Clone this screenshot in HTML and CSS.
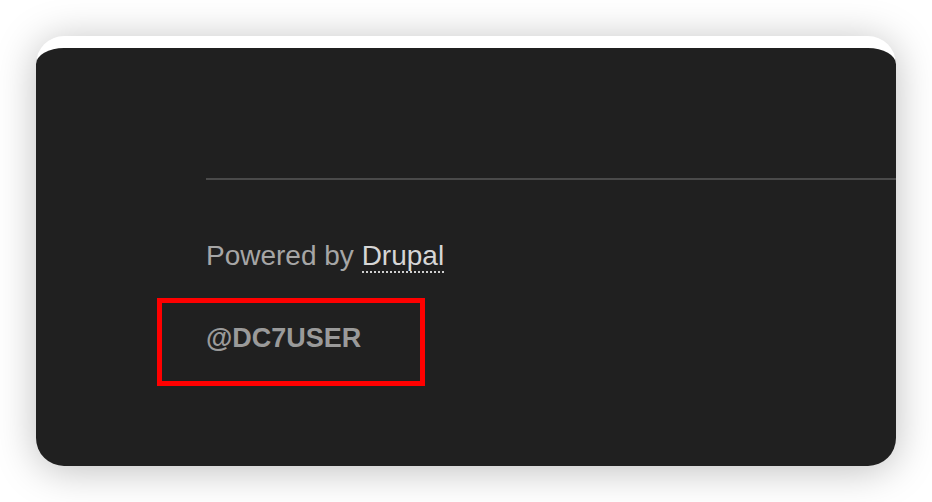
FILE: index.html
```html
<!DOCTYPE html>
<html lang="en">
<head>
<meta charset="utf-8">
<title>Footer</title>
<link rel="stylesheet" href="styles.css">
</head>
<body>
<div class="frame">
  <footer class="card">
    <div class="content">
      <hr class="rule">
      <p class="powered">Powered by <a class="drupal" href="#">Drupal</a></p>
      <p class="handle">@DC7USER</p>
    </div>
    <div class="highlight"></div>
  </footer>
</div>
</body>
</html>
```

FILE: styles.css
```css
html, body {
  margin: 0;
  padding: 0;
  background: #ffffff;
}

.frame {
  padding: 36px 36px 36px 36px;
  width: 860px;
}

.card {
  position: relative;
  box-sizing: border-box;
  width: 860px;
  height: 430px;
  background: #202020;
  border-top: 12px solid #ffffff;
  border-radius: 28px;
  box-shadow: 0 4px 40px rgba(0, 0, 0, 0.26);
  overflow: hidden;
  font-family: "Liberation Sans", Arial, sans-serif;
}

.content {
  padding-left: 170px;
  padding-top: 130px;
}

.rule {
  margin: 0;
  border: 0;
  height: 2px;
  background: #4a4a4a;
}

.powered {
  margin: 60px 0 0 0;
  font-size: 28px;
  line-height: 32px;
  color: #a6a6a6;
}

.drupal {
  color: #d6d6d6;
  text-decoration: none;
  border-bottom: 2px dotted #d0d0d0;
}

.handle {
  margin: 50px 0 0 0;
  font-size: 27px;
  line-height: 32px;
  font-weight: bold;
  color: #9a9a9a;
}

.highlight {
  position: absolute;
  left: 121px;
  top: 250px;
  width: 258px;
  height: 78px;
  border: 5px solid #ff0000;
}
```
